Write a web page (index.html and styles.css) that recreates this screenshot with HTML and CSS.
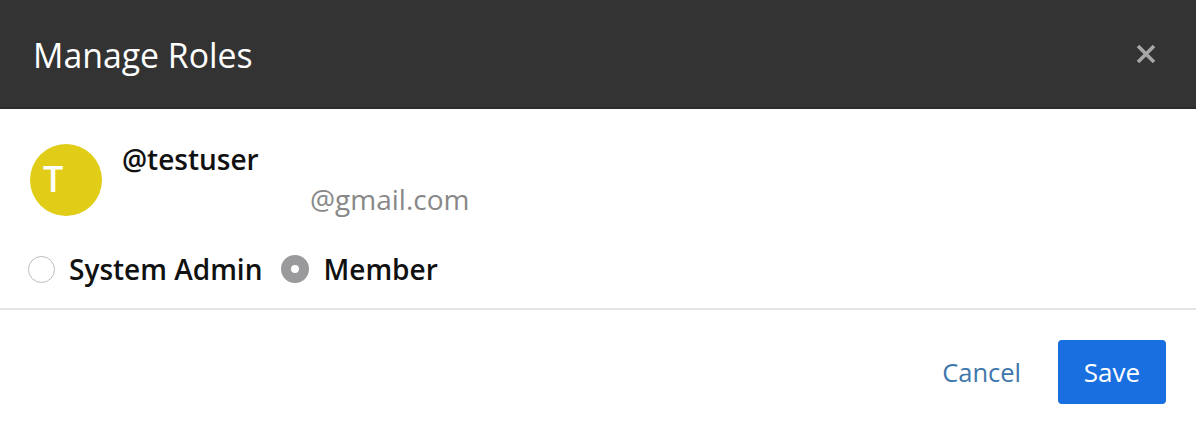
FILE: index.html
```html
<!DOCTYPE html>
<html lang="en">
<head>
  <meta charset="UTF-8">
  <title>Manage Roles</title>
  <link rel="stylesheet" href="styles.css">
</head>
<body>
  <div class="modal">
    <div class="modal-header">
      <h1>Manage Roles</h1>
      <button class="close" aria-label="Close">
        <svg width="22" height="22" viewBox="0 0 22 22"><path d="M3 3L19 19M19 3L3 19" stroke="#a7a7a7" stroke-width="3.6" stroke-linecap="butt"/></svg>
      </button>
    </div>
    <div class="modal-body">
      <div class="user">
        <div class="avatar">T</div>
        <div class="user-info">
          <div class="username">@testuser</div>
          <div class="email">@gmail.com</div>
        </div>
      </div>
      <div class="roles">
        <label class="role"><span class="radio"></span>System Admin</label>
        <label class="role"><span class="radio checked"></span>Member</label>
      </div>
    </div>
    <div class="modal-footer">
      <button class="cancel">Cancel</button>
      <button class="save">Save</button>
    </div>
  </div>
</body>
</html>
```

FILE: styles.css
```css
body {
  margin: 0;
  font-family: 'Open Sans', sans-serif;
  background: #fff;
}

.modal {
  width: 1196px;
  height: 434px;
  background: #fff;
}

.modal-header {
  height: 107px;
  background: #333333;
  border-bottom: 2px solid #2a2a2a;
  display: flex;
  align-items: center;
  justify-content: space-between;
  padding: 0 39px 0 33px;
}

.modal-header h1 {
  margin: 0;
  color: #fff;
  font-weight: 400;
  font-size: 33.8px;
  margin-top: 2px;
}

.close {
  background: none;
  border: none;
  padding: 0;
  width: 22px;
  height: 22px;
  cursor: pointer;
}

.modal-body {
  box-sizing: border-box;
  height: 201px;
  padding: 32px 28px 0 30px;
  border-bottom: 2px solid #e4e4e4;
}

.user {
  display: flex;
}

.avatar {
  box-sizing: border-box;
  width: 72px;
  height: 72px;
  border-radius: 50%;
  background: #e1cc17;
  color: #fff;
  font-size: 36px;
  font-weight: 600;
  line-height: 1;
  display: flex;
  align-items: center;
  padding: 0 0 3px 13px;
  margin-top: 3px;
}

.user-info {
  margin-left: 20px;
}

.username {
  font-size: 28px;
  font-weight: 600;
  color: #111;
  line-height: 36px;
}

.email {
  font-size: 28px;
  color: #888;
  margin-left: 188px;
  margin-top: 4px;
  line-height: 36px;
}

.roles {
  display: flex;
  align-items: center;
  margin-top: 34px;
  margin-left: -2px;
}

.role {
  display: flex;
  align-items: center;
  font-size: 28px;
  font-weight: 600;
  color: #111;
  line-height: 36px;
  margin-right: 19px;
}

.radio {
  width: 27px;
  height: 27px;
  border: 1px solid #bbb;
  border-radius: 50%;
  margin-right: 14px;
  box-sizing: border-box;
  background: #fff;
}

.radio.checked {
  width: 28px;
  height: 28px;
  border: 10px solid #9a9a9c;
  margin-right: 14px;
}

.modal-footer {
  display: flex;
  justify-content: flex-end;
  align-items: center;
  padding: 30px 30px 0 0;
}

.cancel {
  background: none;
  border: none;
  padding: 0;
  color: #3d77ab;
  font-family: 'Open Sans', sans-serif;
  font-size: 25.5px;
  margin-right: 37px;
  cursor: pointer;
}

.save {
  background: #1a6fe0;
  color: #fff;
  border: none;
  border-radius: 4px;
  width: 108px;
  height: 64px;
  font-family: 'Open Sans', sans-serif;
  font-size: 26px;
  cursor: pointer;
}
```
